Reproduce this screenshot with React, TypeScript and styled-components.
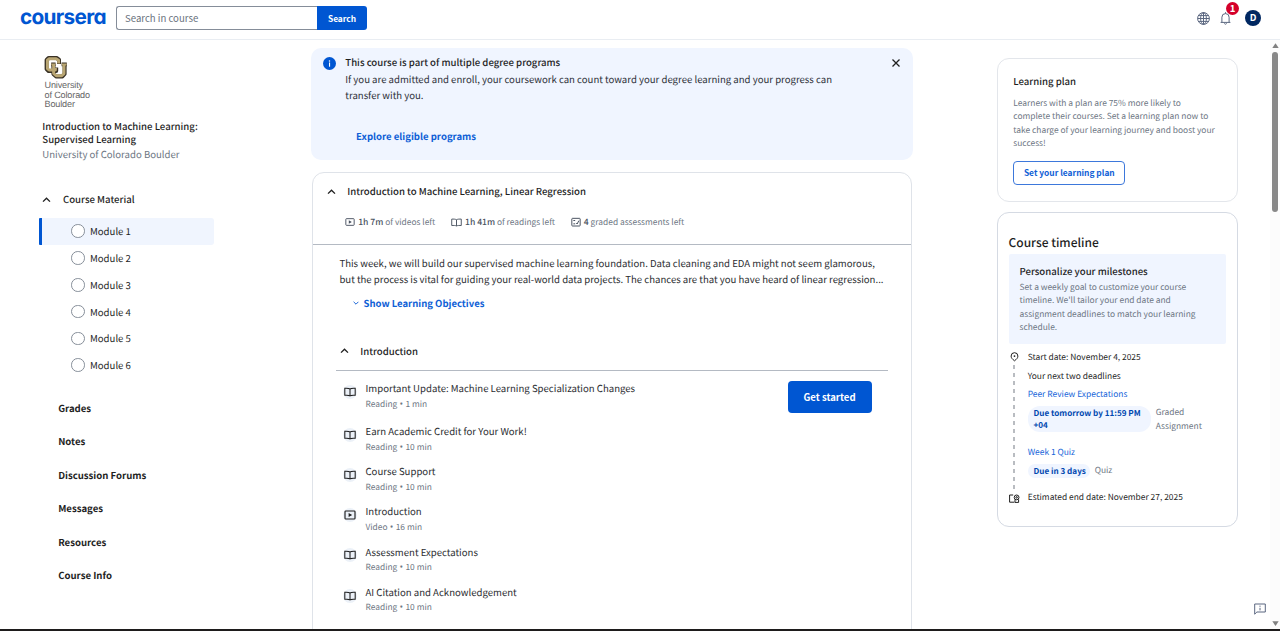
import React from 'react';
import styled, { createGlobalStyle, css } from 'styled-components';

const blue = '#0056d2';
const linkBlue = '#0f5fd6';
const ink = '#1f1f1f';
const grey = '#6d7683';

const GlobalStyle = createGlobalStyle`
  * { box-sizing: border-box; }
  body {
    margin: 0;
    background: #fff;
    color: ${ink};
    font-family: "Noto Sans CJK SC", "Open Sans", sans-serif;
    font-size: 9.6px;
    text-rendering: geometricPrecision;
    overflow: hidden;
  }
  button, input { font: inherit; color: inherit; }
  p, h1, h2, h3, ul { margin: 0; padding: 0; font-weight: 400; font-size: inherit; }
  ul { list-style: none; }
  svg { display: block; flex: none; }
`;

const Page = styled.div`
  display: flex;
  flex-direction: column;
  height: 631px;
`;

/* ---------- header ---------- */

const Header = styled.header`
  display: flex;
  align-items: flex-start;
  height: 40px;
  padding: 6px 19px 0 20px;
  border-bottom: 1px solid #e9edf2;
`;

const Wordmark = styled.div`
  width: 96px;
  height: 24px;
  color: ${blue};
  font: 700 20.8px/23px Inter, sans-serif;
  font-feature-settings: "cv11";
  letter-spacing: -0.7px;
`;

const SearchForm = styled.form`
  display: flex;
  width: 251px;
  height: 24px;
`;

const SearchInput = styled.input`
  flex: 1;
  min-width: 0;
  padding: 0 8px 1px;
  border: 1px solid #858d99;
  border-right: 0;
  border-radius: 3px 0 0 3px;
  outline: none;
  &::placeholder { color: #69717c; opacity: 1; }
`;

const SearchButton = styled.button`
  width: 50px;
  padding: 0 0 1px;
  border: 0;
  border-radius: 0 3px 3px 0;
  background: ${blue};
  color: #fff;
  font-size: 8.35px;
  font-weight: 700;
`;

const HeaderTools = styled.div`
  display: flex;
  align-items: center;
  height: 24px;
  margin-left: auto;
`;

const BellWrap = styled.div`
  position: relative;
  margin: 0 14.5px 0 9.5px;
`;

const Badge = styled.span`
  position: absolute;
  left: 6.5px;
  top: -9.5px;
  width: 13.4px;
  height: 13.4px;
  border-radius: 50%;
  background: #d4002a;
  color: #fff;
  font-size: 9.6px;
  font-weight: 700;
  line-height: 12.4px;
  text-align: center;
`;

const Avatar = styled.span`
  width: 16px;
  height: 16px;
  border-radius: 50%;
  background: #002761;
  color: #fff;
  font-size: 9.4px;
  font-weight: 700;
  line-height: 15px;
  text-align: center;
`;

/* ---------- body frame ---------- */

const Body = styled.div`
  display: flex;
  align-items: flex-start;
  flex: 1;
  min-height: 0;
  overflow: hidden;
`;

const TaskbarEdge = styled.div`
  height: 2px;
  background: #1e1c1c;
`;

/* ---------- sidebar ---------- */

const Sidebar = styled.aside`
  width: 175px;
  margin: 16px 97px 0 39px;
`;

const School = styled.div`
  padding-left: 5px;
  height: 54.7px;
`;

const SchoolName = styled.p`
  padding: 2px 0 0 0.5px;
  color: #666;
  font: 9.1px/9.7px "Liberation Sans", sans-serif;
  letter-spacing: -0.15px;
`;

const CourseInfo = styled.div`
  padding: 9.2px 0 0 3.3px;
`;

const CourseName = styled.h1`
  font-weight: 500;
  line-height: 13.4px;
`;

const SchoolLink = styled.p`
  color: ${grey};
  line-height: 15px;
`;

const MaterialToggle = styled.div`
  display: flex;
  align-items: center;
  gap: 12px;
  height: 20px;
  margin: 27.7px 0 8.4px;
  padding-left: 3px;
  font-weight: 500;
  line-height: 18px;
`;

const Label = styled.span``;

const ModuleRow = styled.li<{ $active?: boolean }>`
  display: flex;
  align-items: center;
  gap: 5.5px;
  height: 26.8px;
  padding-left: 29px;
  border-left: 3px solid transparent;
  ${(p) =>
    p.$active &&
    css`
      border-left-color: ${blue};
      border-radius: 1px 3px 3px 1px;
      background: #f0f5fe;
    `}
`;

const Ring = styled.i`
  width: 13.5px;
  height: 13.5px;
  border: 1px solid #868e99;
  border-radius: 50%;
  background: #fff;
`;

const NavItem = styled.li`
  height: 33.5px;
  padding-left: 19.2px;
  font-weight: 700;
  line-height: 33.5px;
`;

const NavList = styled.ul`
  padding-top: 13.4px;
`;

/* ---------- main column ---------- */

const Main = styled.main`
  width: 602px;
  margin-right: 84px;
`;

const Banner = styled.section`
  display: flex;
  height: 112px;
  margin-top: 8px;
  padding: 6px 12px 0 12px;
  border-radius: 10px;
  background: #f0f5ff;
`;

const BannerText = styled.div`
  flex: 1;
  padding-left: 9.3px;
`;

const BannerTitle = styled.h2`
  padding-top: 1px;
  font-weight: 500;
  line-height: 15.5px;
`;

const BannerCopy = styled.p`
  line-height: 16.5px;
  padding-top: 0.4px;
  color: #2d3038;
`;

const BannerLink = styled.a`
  display: block;
  margin: 23.7px 0 0 10.8px;
  color: ${linkBlue};
  font-size: 9.55px;
  font-weight: 700;
  line-height: 16px;
`;

const ModuleCard = styled.section`
  width: 600px;
  height: 480px;
  margin: 12px 0 0 1px;
  border: 1px solid #dfe3e9;
  border-radius: 12px;
`;

const ModuleHead = styled.div`
  height: 72px;
  border-bottom: 1px solid #b4bac3;
`;

const ModuleTitle = styled.h2`
  display: flex;
  align-items: center;
  gap: 11.2px;
  padding: 9.4px 0 0 14px;
  font-weight: 500;
  line-height: 19px;
`;

const Stats = styled.div`
  display: flex;
  padding: 13px 0 0 32.4px;
  color: ${grey};
  font-size: 8.4px;
  line-height: 16px;
`;

const Stat = styled.span`
  display: flex;
  align-items: center;
  gap: 2.8px;
  margin-right: 16px;
  b { font-weight: 500; color: #4b5462; font-size: 8.6px; }
`;

const ModuleBody = styled.div`
  padding: 10px 23.5px 0 23px;
`;

const Summary = styled.p`
  padding-left: 3.4px;
  line-height: 16px;
  color: #2b2d31;
  white-space: nowrap;
`;

const Objectives = styled.a`
  display: flex;
  align-items: center;
  gap: 5px;
  padding: 8px 0 0 16.5px;
  color: ${linkBlue};
  font-size: 9.51px;
  font-weight: 700;
  line-height: 16px;
`;

const LessonHead = styled.h3`
  display: flex;
  align-items: center;
  gap: 11.6px;
  height: 36px;
  margin-top: 24px;
  padding: 0 0 3.6px 3.6px;
  border-bottom: 1px solid #b4bac3;
  font-weight: 500;
`;

const LessonRow = styled.li<{ $tall?: boolean }>`
  display: flex;
  align-items: flex-start;
  height: ${(p) => (p.$tall ? 43 : 40.2)}px;
`;

const LessonList = styled.ul`
  padding: 10px 0 0 6.5px;
`;

const IconDisc = styled.span`
  display: grid;
  place-items: center;
  width: 14px;
  height: 14px;
  margin: 3.8px 9px 0 0;
  border-radius: 50%;
  background: #ecf1f8;
`;

const LessonText = styled.div`
  flex: 1;
  color: #2b2d31;
  line-height: 15px;
`;

const LessonMeta = styled.p`
  padding-top: 0.6px;
  color: ${grey};
  font-size: 8.4px;
  line-height: 14.6px;
`;

const Dot = styled.span`
  font-family: "Open Sans", sans-serif;
  font-size: 9.6px;
  line-height: 1;
  margin: 0 0.4px;
`;

const StartButton = styled.button`
  width: 84px;
  height: 32px;
  margin-right: 16px;
  padding: 0 0 1px;
  border: 0;
  border-radius: 4px;
  background: ${blue};
  color: #fff;
  font-size: 9.55px;
  font-weight: 700;
`;

/* ---------- right column ---------- */

const Rail = styled.aside`
  width: 241px;
  margin-top: 18px;
  margin-left: -0.5px;
`;

const PlanCard = styled.section`
  height: 144px;
  padding: 13px 15.8px 0;
  border: 1px solid #e3e6eb;
  border-radius: 12px;
`;

const RailTitle = styled.h3`
  font-weight: 500;
  line-height: 18px;
`;

const RailCopy = styled.p`
  color: ${grey};
  font-size: 8.42px;
  line-height: 13.4px;
  white-space: nowrap;
`;

const PlanCopy = styled(RailCopy)`
  padding-top: 7px;
`;

const PlanButton = styled.button`
  width: 112px;
  height: 24.5px;
  margin-top: 10px;
  padding: 0 0 1px;
  border: 1px solid #3d78db;
  border-radius: 4px;
  background: #fff;
  color: ${linkBlue};
  font-size: 8.4px;
  font-weight: 700;
`;

const TimelineCard = styled.section`
  height: 314.5px;
  margin-top: 10.4px;
  padding: 21px 11px 0 11px;
  border: 1px solid #d5dae3;
  border-radius: 12px;
`;

const TimelineTitle = styled.h2`
  font-size: 12px;
  font-weight: 500;
  line-height: 18px;
`;

const Milestones = styled.div`
  height: 90.5px;
  margin-top: 1.6px;
  padding: 8px 11px 0;
  border-radius: 2px;
  background: #f0f5ff;
`;

const MilestoneCopy = styled(RailCopy)`
  padding-top: 1px;
`;

const Schedule = styled.div`
  display: flex;
  padding-top: 3.7px;
  font-size: 8.42px;
`;

const Track = styled.div`
  display: flex;
  flex-direction: column;
  align-items: center;
  width: 11px;
  margin-right: 8.2px;
  padding-top: 4px;
`;

const Dashes = styled.div`
  width: 2px;
  height: 124px;
  margin: 3px 0 4.4px;
  background: repeating-linear-gradient(#b9bcc1 0 4px, transparent 4px 8px);
`;

const Events = styled.div`
  flex: 1;
`;

const EventLine = styled.p`
  line-height: 18.4px;
`;

const EventLink = styled.a`
  display: block;
  color: #1664d9;
  line-height: 18px;
`;

const DueRow = styled.div`
  display: flex;
  align-items: flex-start;
  margin-bottom: 9.8px;
`;

const DuePill = styled.span<{ $wide?: boolean }>`
  width: ${(p) => (p.$wide ? 123 : 62)}px;
  margin-top: 3.5px;
  padding: 1.4px 0 0.6px 5.8px;
  border-radius: ${(p) => (p.$wide ? 12 : 8)}px;
  background: #f0f5ff;
  color: #0048b0;
  font-weight: 700;
  font-size: 8.12px;
  line-height: 12px;
`;

const DueKind = styled.span`
  margin-left: 5px;
  color: ${grey};
  line-height: 13.4px;
  padding-top: 3.4px;
`;

/* ---------- scrollbar and feedback ---------- */

const ScrollColumn = styled.div`
  display: flex;
  flex-direction: column;
  align-items: center;
  align-self: stretch;
  width: 10px;
  margin-left: auto;
  padding: 2.5px 0 3px;
  background: #fcfcfc;
`;

const Thumb = styled.div`
  width: 6px;
  height: 160px;
  margin: 4px 0 auto;
  border-radius: 3px;
  background: #888;
`;

const Feedback = styled.div`
  align-self: flex-end;
  margin: 0 0 14px 16px;
`;

/* ---------- icons ---------- */

const Chevron = ({ down = false, size = 8, color = ink }: { down?: boolean; size?: number; color?: string }) => (
  <svg width={size} height={size} viewBox="0 0 8 8" fill="none" stroke={color} strokeWidth="1.2">
    <path d={down ? 'M0.8 2.4 4 5.6 7.2 2.4' : 'M0.9 5.9 4 2.8 7.1 5.9'} />
  </svg>
);

const Book = ({ size = 12, color = ink }: { size?: number; color?: string }) => (
  <svg width={size} height={size} viewBox="0 0 12 12" fill="none" stroke={color} strokeWidth="1.05">
    <path d="M6 3C5.1 2.3 2.6 2.2 0.8 2.3V9.3C2.6 9.2 5.1 9.1 6 9.8 6.9 9.1 9.4 9.2 11.2 9.3V2.3C9.4 2.2 6.9 2.3 6 3ZM6 3V9.8" />
  </svg>
);

const Play = ({ size = 12, color = ink }: { size?: number; color?: string }) => (
  <svg width={size} height={size} viewBox="0 0 12 12" fill="none" stroke={color} strokeWidth="1.15">
    <rect x="1" y="2" width="10" height="8" rx="0.8" />
    <path d="M4.6 3.9 8.2 6 4.6 8.1Z" fill={color} stroke="none" />
  </svg>
);

const Assessment = () => (
  <svg width="10" height="10" viewBox="0 0 12 12" fill="none" stroke="#4b5462" strokeWidth="1.2">
    <rect x="1" y="1.6" width="10" height="9.2" rx="0.8" />
    <path d="M2.8 4.2H5M2.8 8.2H5M6.3 7.2 7.4 8.4 9.4 4.4" />
  </svg>
);

const Globe = () => (
  <svg width="13" height="13" viewBox="0 0 13 13" fill="none" stroke="#5b6780" strokeWidth="1">
    <circle cx="6.5" cy="6.5" r="5.9" />
    <ellipse cx="6.5" cy="6.5" rx="2.9" ry="5.9" />
    <path d="M6.5 0.6V12.4M0.6 6.5H12.4M1.4 3.6H11.6M1.4 9.4H11.6" />
  </svg>
);

const Bell = () => (
  <svg width="11" height="13" viewBox="0 0 11 13" fill="none" stroke="#5b6780" strokeWidth="1">
    <path d="M0.6 10.4H10.4M1.9 10.4V5.2A3.6 3.6 0 0 1 9.1 5.2V10.4M5.5 0.2V1.6M4.4 11.4A1.15 1.15 0 0 0 6.6 11.4" />
  </svg>
);

const InfoMark = styled.svg`
  margin-top: 3px;
`;

const Info = () => (
  <InfoMark width="13" height="13" viewBox="0 0 13 13">
    <circle cx="6.5" cy="6.5" r="6.5" fill={blue} />
    <circle cx="6.5" cy="3.9" r="0.75" fill="#fff" />
    <rect x="6" y="5.5" width="1.1" height="4.2" fill="#fff" />
  </InfoMark>
);

const CloseMark = styled.svg`
  margin-top: 3.6px;
`;

const Close = () => (
  <CloseMark width="10" height="10" viewBox="0 0 10 10" stroke={ink} strokeWidth="1.3">
    <path d="M1.5 1.5 8.5 8.5M8.5 1.5 1.5 8.5" />
  </CloseMark>
);

const Pin = () => (
  <svg width="9" height="10" viewBox="0 0 9 10" fill="none" stroke={ink} strokeWidth="1">
    <path d="M4.5 8.8C2.4 7.2 1.1 5.9 1.1 4.1A3.4 3.4 0 0 1 7.9 4.1C7.9 5.9 6.6 7.2 4.5 8.8Z" />
    <circle cx="4.5" cy="4.1" r="0.9" fill={ink} stroke="none" />
  </svg>
);

const Certificate = () => (
  <svg width="11" height="9" viewBox="0 0 11 9" fill="none" stroke={ink} strokeWidth="1">
    <path d="M4.2 1H0.6V8.2H5.4" />
    <circle cx="7.6" cy="3.4" r="2.4" />
    <circle cx="7.6" cy="3.4" r="0.8" />
    <path d="M6 5.4V8.4H9.6V5.4" />
  </svg>
);

const FeedbackIcon = () => (
  <svg width="12" height="12" viewBox="0 0 12 12" fill="none" stroke="#5b6780" strokeWidth="1">
    <path d="M0.7 11.2V1H11.3V9H2.9Z" />
    <path d="M6 2.6V3.8M6 4.8V7.4" />
  </svg>
);

const CULogo = () => (
  <svg width="24" height="23" viewBox="0 0 24 23" fill="none" strokeLinejoin="round">
    <path d="M15 8V3.6L12.6 2H4.6L2.6 4V13L4.6 15H12.2V11.5" stroke="#3a3226" strokeWidth="4" />
    <path d="M9.4 8.6V18L12 20.4H18.4L20.6 18V8.6" stroke="#3a3226" strokeWidth="4" />
    <path d="M7.2 8.4H11.6M17.6 8.4H22.8" stroke="#3a3226" strokeWidth="3.6" />
    <path d="M14.6 7.4V4.2L12.2 2.8H5L3.4 4.2V12.6L5 14H11.4V12" stroke="#b9a673" strokeWidth="2.9" />
    <path d="M9.6 8.8V17.4L12.2 19.8H17.8L20 17.6V8.8" stroke="#b9a673" strokeWidth="2.9" />
    <path d="M7.4 8.4H11.4M17.8 8.4H22.6" stroke="#b9a673" strokeWidth="2" />
  </svg>
);

const Arrow = ({ down = false }: { down?: boolean }) => (
  <svg width="7" height="5" viewBox="0 0 7 5" fill="#808080">
    <path d={down ? 'M0.3 0.3H6.7L3.5 4.9Z' : 'M0.3 4.9H6.7L3.5 0.3Z'} />
  </svg>
);

/* ---------- data ---------- */

const modules = ['Module 1', 'Module 2', 'Module 3', 'Module 4', 'Module 5', 'Module 6'];
const nav = ['Grades', 'Notes', 'Discussion Forums', 'Messages', 'Resources', 'Course Info'];
const lessons = [
  { title: 'Important Update: Machine Learning Specialization Changes', kind: 'Reading', time: '1 min' },
  { title: 'Earn Academic Credit for Your Work!', kind: 'Reading', time: '10 min' },
  { title: 'Course Support', kind: 'Reading', time: '10 min' },
  { title: 'Introduction', kind: 'Video', time: '16 min' },
  { title: 'Assessment Expectations', kind: 'Reading', time: '10 min' },
  { title: 'AI Citation and Acknowledgement', kind: 'Reading', time: '10 min' },
];

export default function App() {
  return (
    <Page>
      <GlobalStyle />
      <Header>
        <Wordmark>coursera</Wordmark>
        <SearchForm>
          <SearchInput placeholder="Search in course" />
          <SearchButton type="button">Search</SearchButton>
        </SearchForm>
        <HeaderTools>
          <Globe />
          <BellWrap>
            <Bell />
            <Badge>1</Badge>
          </BellWrap>
          <Avatar>D</Avatar>
        </HeaderTools>
      </Header>

      <Body>
        <Sidebar>
          <School>
            <CULogo />
            <SchoolName>
              University
              <br />
              of Colorado
              <br />
              Boulder
            </SchoolName>
          </School>
          <CourseInfo>
            <CourseName>
              Introduction to Machine Learning:
              <br />
              Supervised Learning
            </CourseName>
            <SchoolLink>University of Colorado Boulder</SchoolLink>
          </CourseInfo>
          <MaterialToggle>
            <Chevron size={9} />
            <Label>Course Material</Label>
          </MaterialToggle>
          <ul>
            {modules.map((name, i) => (
              <ModuleRow key={name} $active={i === 0}>
                <Ring />
                <Label>{name}</Label>
              </ModuleRow>
            ))}
          </ul>
          <NavList>
            {nav.map((name) => (
              <NavItem key={name}>{name}</NavItem>
            ))}
          </NavList>
        </Sidebar>

        <Main>
          <Banner>
            <Info />
            <BannerText>
              <BannerTitle>This course is part of multiple degree programs</BannerTitle>
              <BannerCopy>
                If you are admitted and enroll, your coursework can count toward your degree learning and your progress can
                <br />
                transfer with you.
              </BannerCopy>
              <BannerLink>Explore eligible programs</BannerLink>
            </BannerText>
            <Close />
          </Banner>

          <ModuleCard>
            <ModuleHead>
              <ModuleTitle>
                <Chevron size={9} />
                <Label>Introduction to Machine Learning, Linear Regression</Label>
              </ModuleTitle>
              <Stats>
                <Stat>
                  <Play size={10} color="#4b5462" />
                  <Label><b>1h 7m</b> of videos left</Label>
                </Stat>
                <Stat>
                  <Book size={11} color="#4b5462" />
                  <Label><b>1h 41m</b> of readings left</Label>
                </Stat>
                <Stat>
                  <Assessment />
                  <Label><b>4</b> graded assessments left</Label>
                </Stat>
              </Stats>
            </ModuleHead>
            <ModuleBody>
              <Summary>
                This week, we will build our supervised machine learning foundation. Data cleaning and EDA might not seem glamorous,
                <br />
                but the process is vital for guiding your real-world data projects. The chances are that you have heard of linear regression...
              </Summary>
              <Objectives>
                <Chevron down size={6} color={blue} />
                <Label>Show Learning Objectives</Label>
              </Objectives>
              <LessonHead>
                <Chevron size={9} />
                <Label>Introduction</Label>
              </LessonHead>
              <LessonList>
                {lessons.map((lesson, i) => (
                  <LessonRow key={lesson.title} $tall={i === 0}>
                    <IconDisc>{lesson.kind === 'Video' ? <Play /> : <Book />}</IconDisc>
                    <LessonText>
                      {lesson.title}
                      <LessonMeta>
                        {lesson.kind} <Dot>•</Dot> {lesson.time}
                      </LessonMeta>
                    </LessonText>
                    {i === 0 && <StartButton>Get started</StartButton>}
                  </LessonRow>
                ))}
              </LessonList>
            </ModuleBody>
          </ModuleCard>
        </Main>

        <Rail>
          <PlanCard>
            <RailTitle>Learning plan</RailTitle>
            <PlanCopy>
              Learners with a plan are 75% more likely to
              <br />
              complete their courses. Set a learning plan now to
              <br />
              take charge of your learning journey and boost your
              <br />
              success!
            </PlanCopy>
            <PlanButton>Set your learning plan</PlanButton>
          </PlanCard>

          <TimelineCard>
            <TimelineTitle>Course timeline</TimelineTitle>
            <Milestones>
              <RailTitle>Personalize your milestones</RailTitle>
              <MilestoneCopy>
                Set a weekly goal to customize your course
                <br />
                timeline. We'll tailor your end date and
                <br />
                assignment deadlines to match your learning
                <br />
                schedule.
              </MilestoneCopy>
            </Milestones>
            <Schedule>
              <Track>
                <Pin />
                <Dashes />
                <Certificate />
              </Track>
              <Events>
                <EventLine>Start date: November 4, 2025</EventLine>
                <EventLine>Your next two deadlines</EventLine>
                <EventLink>Peer Review Expectations</EventLink>
                <DueRow>
                  <DuePill $wide>
                    Due tomorrow by 11:59 PM
                    <br />
                    +04
                  </DuePill>
                  <DueKind>
                    Graded
                    <br />
                    Assignment
                  </DueKind>
                </DueRow>
                <EventLink>Week 1 Quiz</EventLink>
                <DueRow>
                  <DuePill>Due in 3 days</DuePill>
                  <DueKind>Quiz</DueKind>
                </DueRow>
                <EventLine>Estimated end date: November 27, 2025</EventLine>
              </Events>
            </Schedule>
          </TimelineCard>
        </Rail>

        <Feedback>
          <FeedbackIcon />
        </Feedback>
        <ScrollColumn>
          <Arrow />
          <Thumb />
          <Arrow down />
        </ScrollColumn>
      </Body>
      <TaskbarEdge />
    </Page>
  );
}
